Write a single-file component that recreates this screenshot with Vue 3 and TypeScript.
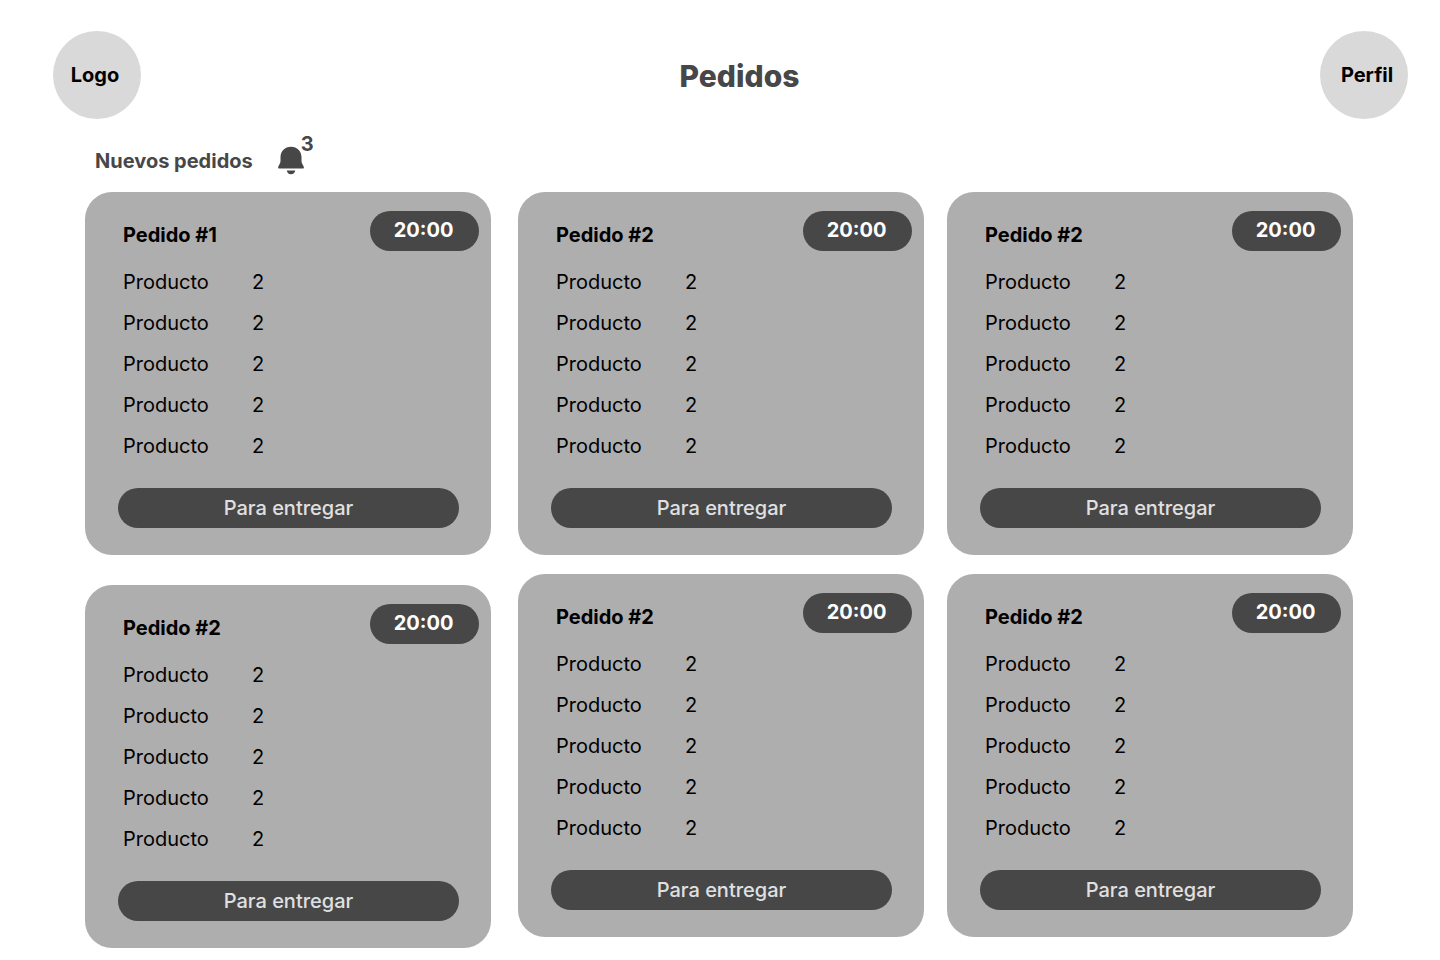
<script setup lang="ts">
interface Item {
  name: string
  quantity: number
}

interface Order {
  id: number
  label: string
  time: string
  items: Item[]
}

const makeOrder = (id: number, label: string): Order => ({
  id,
  label,
  time: '20:00',
  items: Array.from({ length: 5 }, () => ({ name: 'Producto', quantity: 2 })),
})

const columns: Order[][] = [
  [makeOrder(1, 'Pedido #1'), makeOrder(2, 'Pedido #2')],
  [makeOrder(3, 'Pedido #2'), makeOrder(4, 'Pedido #2')],
  [makeOrder(5, 'Pedido #2'), makeOrder(6, 'Pedido #2')],
]

const newOrders = 3
</script>

<template>
  <div class="page">
    <header class="header">
      <a class="circle logo" href="#">Logo</a>
      <h1 class="title">Pedidos</h1>
      <button class="circle profile" type="button">Perfil</button>
    </header>

    <main>
      <div class="section-head">
        <h2 class="section-title">Nuevos pedidos</h2>
        <div class="bell">
          <svg width="26" height="29" viewBox="0 0 26 29" aria-hidden="true">
            <path
              d="M13 0.7C6.9 0.7 2.5 5 2.5 11V14.6C2.5 16.8 1.9 17.8 1 19.2C0.4 20.1 0.1 20.9 0.1 21.8C0.1 22.3 0.4 22.6 0.9 22.6H25.1C25.6 22.6 25.9 22.3 25.9 21.8C25.9 20.9 25.6 20.1 25 19.2C24.1 17.8 23.5 16.8 23.5 14.6V11C23.5 5 19.1 0.7 13 0.7Z"
            />
            <path d="M8.8 24.6H17.2C16.9 26.8 15.4 28.3 13 28.3C10.6 28.3 9.1 26.8 8.8 24.6Z" />
          </svg>
          <span class="count">{{ newOrders }}</span>
        </div>
      </div>

      <div class="board">
        <div v-for="(column, index) in columns" :key="index" class="column">
          <article v-for="order in column" :key="order.id" class="card">
            <div class="card-head">
              <h3 class="card-title">{{ order.label }}</h3>
              <span class="time">{{ order.time }}</span>
            </div>
            <table class="items">
              <tbody>
                <tr v-for="(item, row) in order.items" :key="row">
                  <td class="name">{{ item.name }}</td>
                  <td>{{ item.quantity }}</td>
                </tr>
              </tbody>
            </table>
            <button class="deliver" type="button">Para entregar</button>
          </article>
        </div>
      </div>
    </main>
  </div>
</template>

<style>
body {
  margin: 0;
  background: #fff;
}
</style>

<style scoped>
.page {
  font-family: Inter, 'Liberation Sans', sans-serif;
  font-size: 20px;
  line-height: 24px;
  color: #000;
}

.page *,
.page {
  box-sizing: border-box;
}

h1,
h2,
h3 {
  margin: 0;
}

.header {
  display: flex;
  align-items: center;
  justify-content: space-between;
  padding: 31px 32px 0 53px;
}

.circle {
  display: flex;
  align-items: center;
  justify-content: center;
  width: 88px;
  height: 88px;
  border: 0;
  border-radius: 50%;
  background: #d9d9d9;
  color: #000;
  font: inherit;
  font-weight: 700;
  text-decoration: none;
}

.logo {
  padding-right: 4px;
}

.profile {
  padding: 0 0 0 6px;
  cursor: pointer;
}

.title {
  padding: 2px 0 0 18px;
  font-size: 30px;
  line-height: 40px;
  font-weight: 800;
  color: #474747;
}

.section-head {
  display: flex;
  align-items: center;
  height: 73px;
  padding: 10px 95px 0;
  color: #474747;
}

.section-title {
  font-size: 20px;
  line-height: 24px;
  font-weight: 700;
}

.bell {
  position: relative;
  display: flex;
  margin-left: 25px;
}

.bell svg {
  fill: #474747;
}

.count {
  position: absolute;
  left: 23px;
  top: -14px;
  font-weight: 700;
}

.board {
  display: flex;
  align-items: flex-start;
  padding: 0 87px 12px 85px;
}

.column {
  display: flex;
  flex: 1 1 0;
  flex-direction: column;
  gap: 19px;
}

.column:first-child {
  gap: 30px;
  margin-right: 27px;
}

.column:last-child {
  margin-left: 23px;
}

.card {
  display: flex;
  flex-direction: column;
  padding: 19px 32px 27px 33px;
  border-radius: 27px;
  background: #aeaeae;
}

.card-head {
  display: flex;
  align-items: flex-start;
  justify-content: space-between;
  margin-right: -20px;
  padding-left: 5px;
}

.card-title {
  padding-top: 12px;
  font-size: 20px;
  line-height: 24px;
  font-weight: 700;
}

.time {
  width: 109px;
  height: 40px;
  padding-right: 2px;
  border-radius: 20px;
  background: #474747;
  color: #fff;
  font-weight: 700;
  line-height: 38px;
  text-align: center;
}

.items {
  margin: 10px 0 22px 5px;
  border-collapse: collapse;
}

.items td {
  height: 41px;
  padding: 0;
}

.items .name {
  width: 129px;
}

.deliver {
  width: 100%;
  height: 40px;
  padding: 0;
  border: 0;
  border-radius: 20px;
  background: #474747;
  color: #e0e0e0;
  font: inherit;
  font-weight: 500;
  cursor: pointer;
}
</style>
